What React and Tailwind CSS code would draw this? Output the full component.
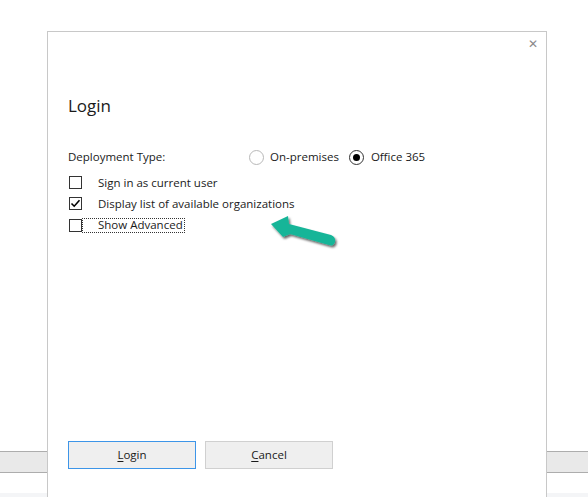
import React from 'react';

const font = { fontFamily: '"Segoe UI", "Open Sans", "Noto Sans", sans-serif' };

const Checkbox = ({ checked }) => (
    <span className="w-[13px] h-[13px] border border-[#333333] bg-white flex items-center justify-center flex-shrink-0">
        {checked && (
            <svg width="11" height="11" viewBox="0 0 11 11">
                <path d="M1.5 5.5 L4.2 8.2 L9.5 2.2" fill="none" stroke="#000" strokeWidth="1.6" />
            </svg>
        )}
    </span>
);

const Radio = ({ checked }) => (
    <span
        className={`w-[15px] h-[15px] rounded-full border bg-white flex items-center justify-center flex-shrink-0 ${
            checked ? 'border-[#333333]' : 'border-[#b8b8b8]'
        }`}
    >
        {checked && <span className="w-[7px] h-[7px] rounded-full bg-black" />}
    </span>
);

// Teal annotation arrow pointing at the checkbox row
const Arrow = () => (
    <svg className="absolute left-[266px] top-[212px]" width="80" height="44" viewBox="0 0 80 44">
        <defs>
            <filter id="sh" x="-20%" y="-20%" width="140%" height="160%">
                <feDropShadow dx="1.5" dy="2" stdDeviation="1.2" floodColor="#000" floodOpacity="0.6" />
            </filter>
        </defs>
        <g filter="url(#sh)">
            <path d="M5 12 L22 4 L23 12 L65 23 Q70 25 69 30 Q67.5 34.5 63 33 L24 22 L17 25 Z" fill="#17b598" />
        </g>
    </svg>
);

export default function App() {
    return (
        <div className="relative w-[588px] h-[497px] bg-white overflow-hidden" style={font}>
            {/* background window behind the dialog */}
            <div className="flex flex-col h-full">
                <div className="h-[451px]" />
                <div className="h-[22px] bg-[#e9e9e9] border-y border-[#adadad]" />
                <div className="h-[20px]" />
                <div className="flex-1 bg-[#f4f5f7]" />
            </div>

            {/* dialog */}
            <div className="absolute left-[47px] top-[31px] w-[500px] h-[480px] bg-white border border-[#c8c8c8]">
                <div className="relative h-full">
                    <span className="absolute right-[8px] top-[6px] text-[#8a8a8a] text-[12px] leading-none">✕</span>

                    <div className="pl-[20px] pt-[63px] text-[#1a1a1a]">
                        <h1 className="text-[17px] leading-[22px] font-normal">Login</h1>

                        <div className="mt-[29px] flex items-center h-[22px] text-[11.5px]">
                            <span className="w-[181px]">Deployment Type:</span>
                            <span className="flex items-center gap-[6px]">
                                <Radio />
                                <span>On-premises</span>
                            </span>
                            <span className="flex items-center gap-[7px] ml-[10px]">
                                <Radio checked />
                                <span>Office 365</span>
                            </span>
                        </div>

                        <div className="mt-[4px] flex flex-col text-[11.5px]">
                            <label className="flex items-center h-[21px] pl-[1px]">
                                <Checkbox />
                                <span className="ml-[16px]">Sign in as current user</span>
                            </label>
                            <label className="flex items-center h-[21px] pl-[1px]">
                                <Checkbox checked />
                                <span className="ml-[16px]">Display list of available organizations</span>
                            </label>
                            <label className="flex items-center h-[22px] pl-[1px]">
                                <Checkbox />
                                <span className="border border-dotted border-[#333333] h-[15px] flex items-center pl-[15px] pr-[1px] leading-none">
                                    Show Advanced
                                </span>
                            </label>
                        </div>
                    </div>

                    {/* buttons */}
                    <div className="absolute left-[20px] top-[409px] flex gap-[9px] text-[11.5px] text-[#1a1a1a]">
                        <button className="w-[128px] h-[28px] bg-[#efefef] border border-[#3d95e8]">
                            <span className="underline underline-offset-2">L</span>ogin
                        </button>
                        <button className="w-[128px] h-[28px] bg-[#efefef] border border-[#d0d0d0]">
                            <span className="underline underline-offset-2">C</span>ancel
                        </button>
                    </div>
                </div>
            </div>

            <Arrow />
        </div>
    );
}
